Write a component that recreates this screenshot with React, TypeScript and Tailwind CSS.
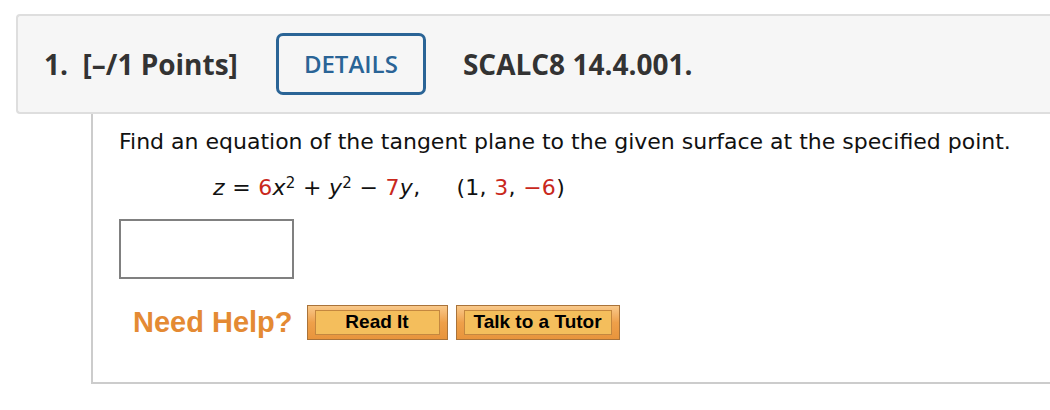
// Question card: header bar + prompt, answer box and help buttons

const verdana = { fontFamily: '"DejaVu Sans", Verdana, sans-serif' };

function HelpButton({ label, width }: { label: string; width: string }) {
  return (
    <button
      className={`${width} h-[35px] border border-[#a9733a] bg-gradient-to-b from-[#f9c98a] via-[#eea04a] to-[#e8943c] px-[7px] py-[4px]`}
    >
      <span className="flex h-full w-full items-center justify-center border border-[#c4873f] bg-[#f4be5c] text-[19px] font-bold text-black [font-family:'Liberation_Sans',Arial,sans-serif]">
        {label}
      </span>
    </button>
  );
}

export default function App() {
  return (
    <div className="w-[1050px] h-[410px] overflow-hidden bg-white">
      {/* header bar */}
      <div className="ml-[16px] mt-[14px] flex h-[100px] w-[1100px] items-center rounded-l-[4px] border-2 border-r-0 border-[#dedede] bg-[#f6f6f6] pl-[26px] text-[#333] [font-family:'Open_Sans',sans-serif]">
        <span className="text-[28px] font-bold">1.&nbsp; [–/1 Points]</span>
        <button className="ml-[38px] flex h-[62px] w-[150px] items-center justify-center rounded-[7px] border-[3px] border-[#2a6496] text-[24px] font-semibold text-[#2a6496]">
          DETAILS
        </button>
        <span className="ml-[37px] text-[28px] font-bold">SCALC8 14.4.001.</span>
      </div>

      {/* question body */}
      <div className="ml-[91px] h-[270px] w-[1000px] border-b-2 border-l-2 border-[#cccccc] pl-[26px] pt-[11px]">
        <p className="text-[22px] leading-[33px] text-[#111]" style={verdana}>
          Find an equation of the tangent plane to the given surface at the specified point.
        </p>
        <p className="mt-[13px] h-[33px] pl-[94px] text-[22px] leading-[33px] tracking-[0.3px] text-[#111]" style={verdana}>
          <i>z</i> = <span className="text-[#c9281c]">6</span>
          <i>x</i>
          <sup className="text-[15px]">2</sup> + <i>y</i>
          <sup className="text-[15px]">2</sup> − <span className="text-[#c9281c]">7</span>
          <i>y</i>,
          <span className="ml-[36px]">
            (1, <span className="text-[#c9281c]">3</span>, <span className="text-[#c9281c]">−6</span>)
          </span>
        </p>

        <div className="mt-[15px] h-[60px] w-[175px] border-2 border-[#808080] bg-white" />

        <div className="mt-[25px] flex items-center pl-[14px]">
          <span className="text-[29px] leading-[36px] font-bold text-[#e48a33] [font-family:'Liberation_Sans',Arial,sans-serif]">
            Need Help?
          </span>
          <div className="ml-[14px] flex gap-[8px]">
            <HelpButton label="Read It" width="w-[141px]" />
            <HelpButton label="Talk to a Tutor" width="w-[164px]" />
          </div>
        </div>
      </div>
    </div>
  );
}
